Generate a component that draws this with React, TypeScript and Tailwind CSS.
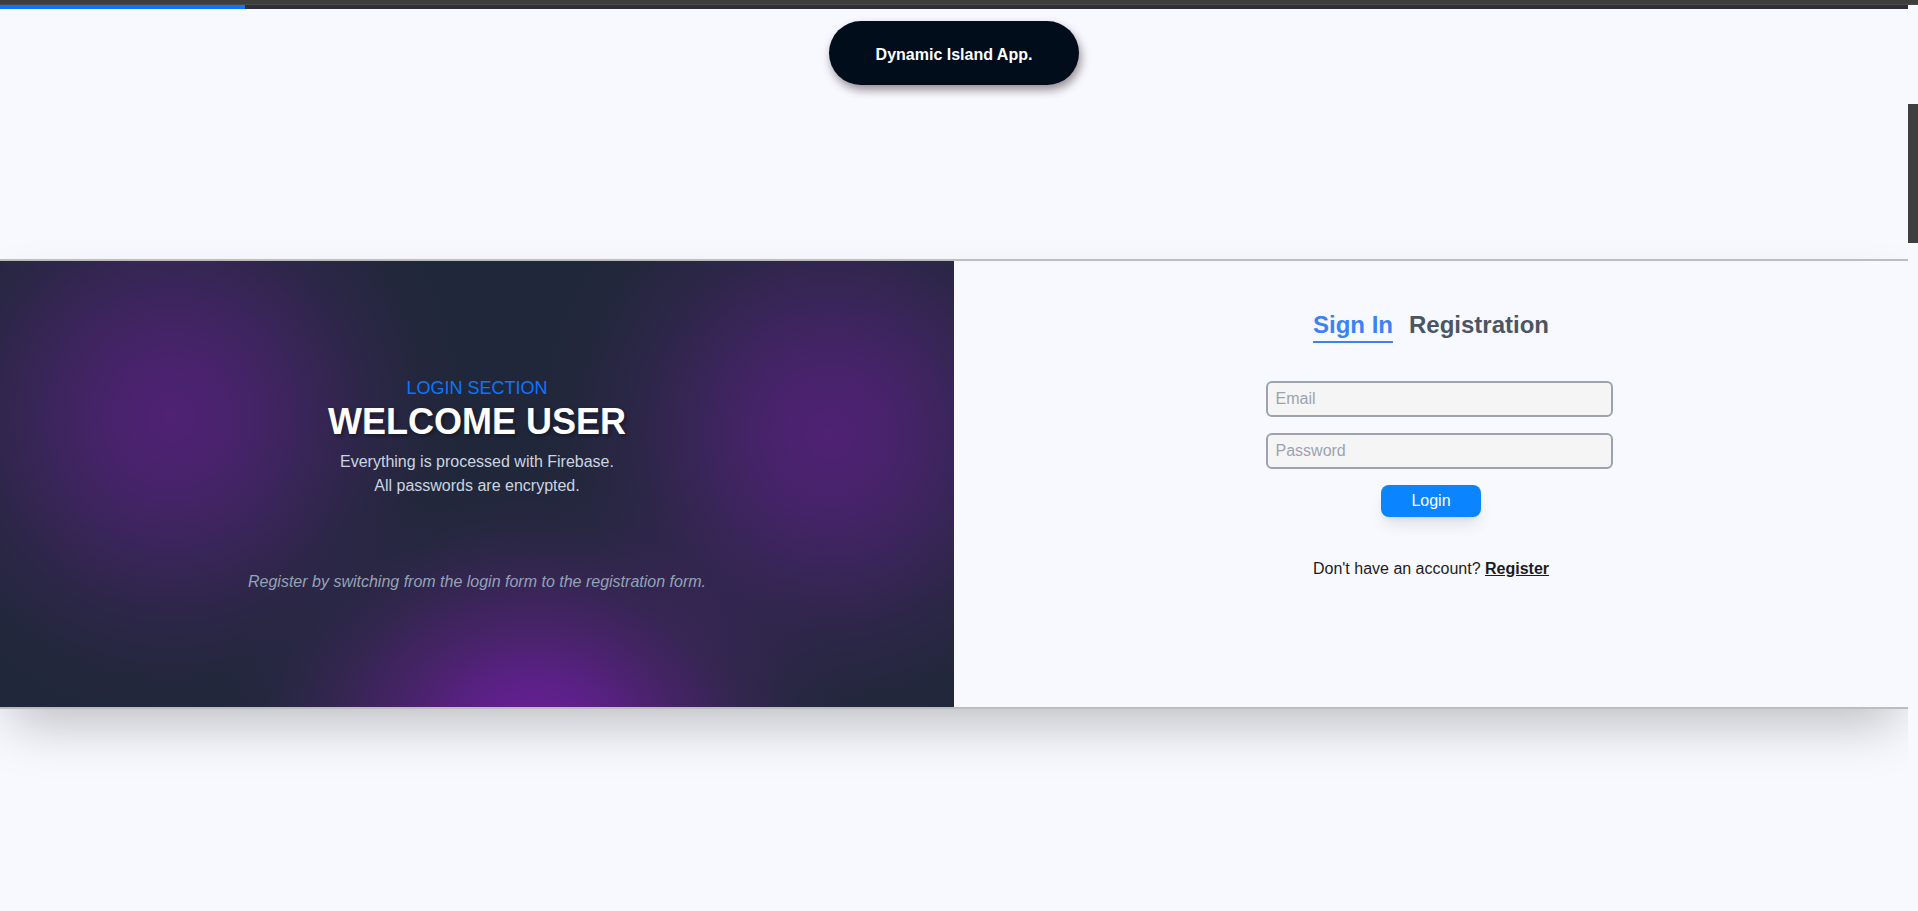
import { useState } from "react";

const fieldClass =
  "h-9 w-full rounded-md border-2 border-[#9ca3af] bg-[#f5f5f5] px-2 text-base text-[#1c1c1e] placeholder:text-[#9ca3af] focus:outline-none";

function ProgressBar() {
  return (
    <div className="h-1 bg-[#2f2f38]">
      <div className="h-1 w-[245px] bg-[#0a75ff]" />
    </div>
  );
}

function Island() {
  return (
    <header className="mx-auto mt-3 flex h-16 w-[250px] items-center justify-center rounded-full bg-[#020d1c] shadow-[2px_5px_10px_rgba(30,10,20,0.45)]">
      <h1 className="pt-1 text-base font-bold text-white">Dynamic Island App.</h1>
    </header>
  );
}

function Welcome() {
  return (
    <div className="flex flex-1 flex-col items-center justify-center bg-[#21273a] bg-[radial-gradient(ellipse_290px_300px_at_18%_35%,rgba(110,30,155,0.6),rgba(106,31,150,0.53)_22%,rgba(96,34,138,0.4)_44%,rgba(80,36,115,0.25)_66%,rgba(60,38,90,0.1)_86%,transparent),radial-gradient(ellipse_290px_300px_at_87%_39%,rgba(110,30,155,0.6),rgba(106,31,150,0.53)_22%,rgba(96,34,138,0.4)_44%,rgba(80,36,115,0.25)_66%,rgba(60,38,90,0.1)_86%,transparent),radial-gradient(ellipse_320px_260px_at_56%_107%,rgba(112,30,160,0.92),rgba(110,30,160,0.76)_22%,rgba(102,32,142,0.56)_42%,rgba(84,36,118,0.36)_64%,rgba(62,38,92,0.16)_84%,transparent)] text-center">
      <p className="text-lg leading-7 text-[#0a75ff]">LOGIN SECTION</p>
      <h2 className="text-4xl leading-10 font-bold text-white text-shadow-[2px_2px_4px_rgba(0,0,0,0.4)]">
        WELCOME USER
      </h2>
      <p className="mt-2 text-base text-[#cbd5e1]">
        Everything is processed with Firebase.
        <br />
        All passwords are encrypted.
      </p>
      <p className="mt-18 text-base text-[#94a3b8] italic">
        Register by switching from the login form to the registration form.
      </p>
    </div>
  );
}

function AuthForm() {
  const [tab, setTab] = useState<"signin" | "register">("signin");
  const active = "border-[#3b82f6] text-[#3b82f6]";
  const idle = "border-transparent text-[#4b5563]";

  return (
    <div className="flex flex-1 flex-col items-center pt-12">
      <div className="flex gap-4 text-2xl font-bold">
        <button
          type="button"
          onClick={() => setTab("signin")}
          className={`border-b-2 ${tab === "signin" ? active : idle}`}
        >
          Sign In
        </button>
        <button
          type="button"
          onClick={() => setTab("register")}
          className={`border-b-2 ${tab === "register" ? active : idle}`}
        >
          Registration
        </button>
      </div>
      <form
        className="mt-[38px] flex flex-col items-center gap-4"
        onSubmit={(event) => event.preventDefault()}
      >
        <div className="ml-4 flex w-[347px] flex-col gap-4">
          <input type="email" aria-label="Email" placeholder="Email" className={fieldClass} />
          <input type="password" aria-label="Password" placeholder="Password" className={fieldClass} />
        </div>
        <button
          type="submit"
          className="h-8 w-[100px] rounded-lg bg-[#0a84ff] text-base text-white shadow-lg"
        >
          Login
        </button>
      </form>
      <p className="mt-10 text-base text-[#1c1c1e]">
        Don't have an account?{" "}
        <a href="#register" className="font-bold underline">
          Register
        </a>
      </p>
    </div>
  );
}

export default function App() {
  return (
    <div className="flex min-h-screen flex-col bg-[#f8f9fe] font-['Liberation_Sans',Arial,sans-serif]">
      <div className="h-[5px] border-b border-[#4a4a4a] bg-[#3e3e3e]" />
      <div className="flex flex-1">
        <main className="min-w-0 flex-1 overflow-hidden">
          <ProgressBar />
          <Island />
          <section className="mt-[174px] flex h-[450px] border-y-2 border-[#bdbdbd] shadow-2xl">
            <Welcome />
            <AuthForm />
          </section>
        </main>
        <div className="w-2.5 pt-[99px]">
          <div className="h-[139px] bg-[#3f3f3f]" />
        </div>
      </div>
    </div>
  );
}
